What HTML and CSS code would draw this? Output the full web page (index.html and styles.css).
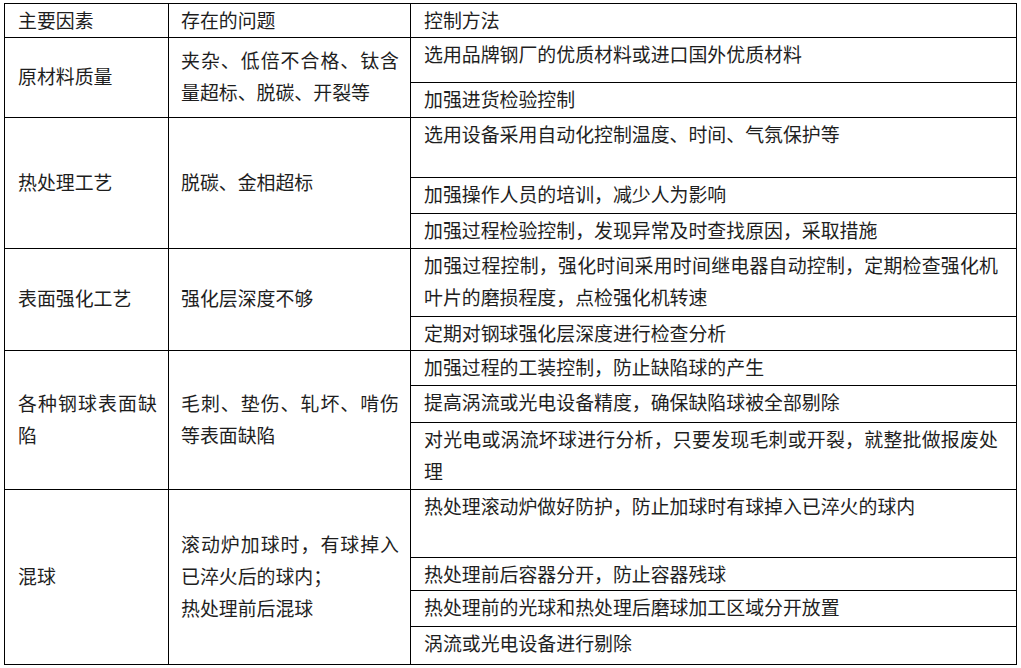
FILE: index.html
```html
<!DOCTYPE html>
<html lang="zh-CN">
<head>
<meta charset="utf-8">
<title>控制方法表</title>
<link rel="stylesheet" href="styles.css">
</head>
<body>
<div class="table">
  <div class="cell c1 head">主要因素</div>
  <div class="cell c2 head">存在的问题</div>
  <div class="cell c3 head">控制方法</div>

  <div class="cell c1 mid r2-3">原材料质量</div>
  <div class="cell c2 mid r2-3"><div>夹杂、低倍不合格、钛含量超标、脱碳、开裂等</div></div>
  <div class="cell c3">选用品牌钢厂的优质材料或进口国外优质材料</div>
  <div class="cell c3">加强进货检验控制</div>

  <div class="cell c1 mid r4-6">热处理工艺</div>
  <div class="cell c2 mid r4-6">脱碳、金相超标</div>
  <div class="cell c3">选用设备采用自动化控制温度、时间、气氛保护等</div>
  <div class="cell c3">加强操作人员的培训，减少人为影响</div>
  <div class="cell c3">加强过程检验控制，发现异常及时查找原因，采取措施</div>

  <div class="cell c1 mid r7-8">表面强化工艺</div>
  <div class="cell c2 mid r7-8">强化层深度不够</div>
  <div class="cell c3">加强过程控制，强化时间采用时间继电器自动控制，定期检查强化机叶片的磨损程度，点检强化机转速</div>
  <div class="cell c3">定期对钢球强化层深度进行检查分析</div>

  <div class="cell c1 mid r9-11"><div>各种钢球表面缺陷</div></div>
  <div class="cell c2 mid r9-11"><div>毛刺、垫伤、轧坏、啃伤等表面缺陷</div></div>
  <div class="cell c3">加强过程的工装控制，防止缺陷球的产生</div>
  <div class="cell c3">提高涡流或光电设备精度，确保缺陷球被全部剔除</div>
  <div class="cell c3">对光电或涡流坏球进行分析，只要发现毛刺或开裂，就整批做报废处理</div>

  <div class="cell c1 mid r12-15">混球</div>
  <div class="cell c2 mid r12-15">
    <div>
      <p class="para">滚动炉加球时，有球掉入已淬火后的球内；</p>
      <p class="para">热处理前后混球</p>
    </div>
  </div>
  <div class="cell c3">热处理滚动炉做好防护，防止加球时有球掉入已淬火的球内</div>
  <div class="cell c3">热处理前后容器分开，防止容器残球</div>
  <div class="cell c3">热处理前的光球和热处理后磨球加工区域分开放置</div>
  <div class="cell c3">涡流或光电设备进行剔除</div>
</div>
</body>
</html>
```

FILE: styles.css
```css
html, body {
  margin: 0;
  padding: 0;
  background: #ffffff;
}

body {
  font-family: "Noto Sans CJK SC", "Noto Sans", sans-serif;
  font-size: 18.9px;
  color: #1e1e1e;
}

.table {
  margin: 3px 0 0 4px;
  width: 1013px;
  display: grid;
  grid-template-columns: 163px 241px 605px;
  grid-template-rows: 33px 44px 34px 59px 35px 34px 67px 33px 34px 36px 66px 67px 32px 35px 37px;
  gap: 1px;
  padding: 1px;
  background: #000000;
  box-sizing: border-box;
}

.cell {
  background: #ffffff;
  line-height: 32px;
  padding-top: 0;
  text-align: justify;
  overflow: hidden;
}

.c1 {
  grid-column: 1;
  padding-left: 13px;
  padding-right: 11px;
}

.c2 {
  grid-column: 2;
  padding-left: 12px;
  padding-right: 11px;
}

.c3 {
  grid-column: 3;
  padding-left: 13px;
  padding-right: 18px;
}

.mid {
  display: flex;
  align-items: center;
  padding-bottom: 3px;
  box-sizing: border-box;
}

.mid > div {
  width: 100%;
  text-align: justify;
}

.para {
  margin: 0;
}

.r2-3 { grid-row: 2 / 4; }
.r4-6 { grid-row: 4 / 7; }
.r7-8 { grid-row: 7 / 9; }
.r9-11 { grid-row: 9 / 12; }
.r12-15 { grid-row: 12 / 16; }
```
